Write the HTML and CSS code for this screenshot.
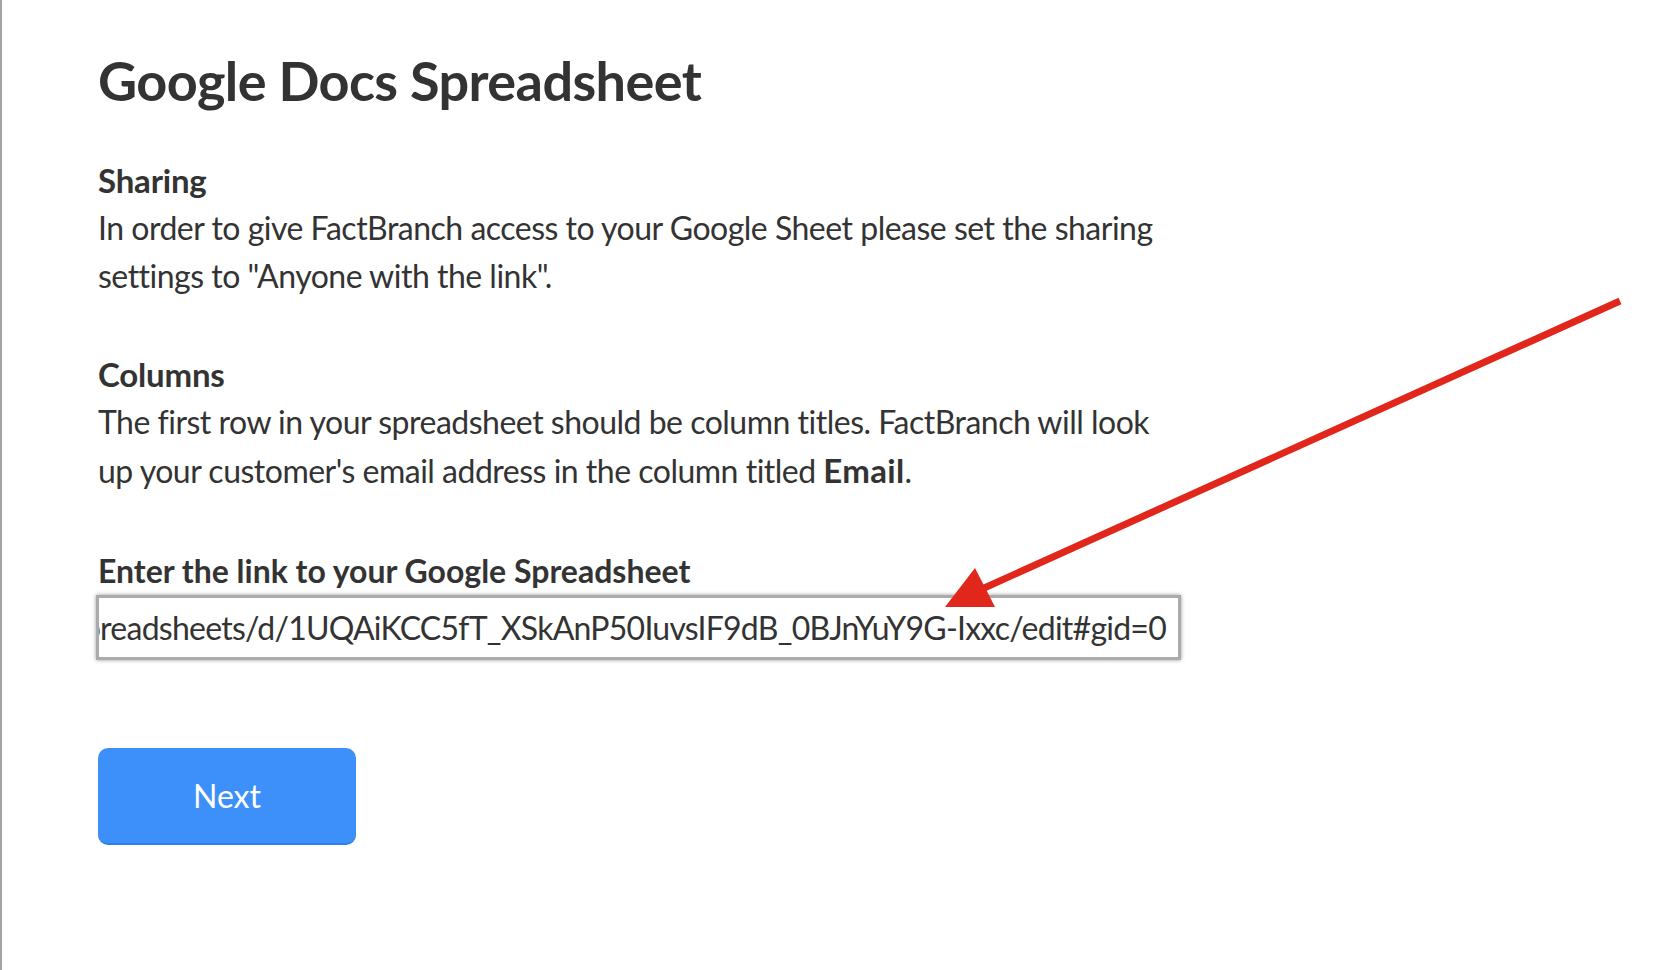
FILE: index.html
```html
<!DOCTYPE html>
<html lang="en">
<head>
<meta charset="utf-8">
<title>Google Docs Spreadsheet</title>
<link rel="stylesheet" href="styles.css">
</head>
<body>
<div class="page">
  <main class="content">
    <h1 class="title">Google Docs Spreadsheet</h1>

    <section class="block">
      <h2 class="block-title">Sharing</h2>
      <p class="block-text">In order to give FactBranch access to your Google Sheet please set the sharing<br>settings to "Anyone with the link".</p>
    </section>

    <section class="block">
      <h2 class="block-title">Columns</h2>
      <p class="block-text">The first row in your spreadsheet should be column titles. FactBranch will look<br>up your customer's email address in the column titled <strong>Email</strong>.</p>
    </section>

    <section class="field">
      <label class="field-label">Enter the link to your Google Spreadsheet</label>
      <div class="field-input" role="textbox"><span class="field-value">https://docs.google.com/spreadsheets/d/1UQAiKCC5fT_XSkAnP50IuvsIF9dB_0BJnYuY9G-Ixxc/edit#gid=0</span></div>
    </section>

    <button class="next-btn" type="button">Next</button>
  </main>

  <svg class="annotation" width="1671" height="970" viewBox="0 0 1671 970" aria-hidden="true">
    <line x1="1620" y1="301" x2="982" y2="589" stroke="#e1261c" stroke-width="7" stroke-linecap="butt"/>
    <polygon points="945,607 975,568 995,607" fill="#e1261c"/>
  </svg>
</div>
</body>
</html>
```

FILE: styles.css
```css
html, body {
  margin: 0;
  padding: 0;
  background: #ffffff;
}

body {
  font-family: "Lato", "Open Sans", sans-serif;
  color: #333333;
}

.page {
  position: relative;
  min-height: 970px;
  border-left: 2px solid #a3a3a3;
  box-sizing: border-box;
}

.content {
  display: flex;
  flex-direction: column;
  align-items: flex-start;
  padding: 49px 0 0 96px;
  width: 1100px;
}

.title {
  margin: 0;
  font-size: 54px;
  line-height: 64px;
  font-weight: 700;
  letter-spacing: -0.6px;
}

.block {
  margin-top: 43px;
}

.block + .block {
  margin-top: 50px;
}

.block-title {
  margin: 0;
  font-size: 33px;
  line-height: 48px;
  font-weight: 700;
  letter-spacing: -0.2px;
}

.block-text {
  margin: 0;
  font-size: 32px;
  line-height: 48px;
  font-weight: 400;
  letter-spacing: -0.5px;
  white-space: nowrap;
}

.block-text strong {
  font-weight: 700;
  font-size: 33px;
  letter-spacing: 0.3px;
}

.field {
  margin-top: 52px;
  display: flex;
  flex-direction: column;
}

.field-label {
  font-size: 32px;
  line-height: 48px;
  font-weight: 700;
}

.field-input {
  box-sizing: border-box;
  width: 1085px;
  height: 65px;
  margin-left: -2px;
  border: 3px solid #ababab;
  box-shadow: 0 0 4px rgba(0, 0, 0, 0.4);
  background: #fff;
  display: flex;
  justify-content: flex-end;
  align-items: center;
  overflow: hidden;
  white-space: nowrap;
  padding: 0 12px 0 6px;
}

.field-value {
  font-size: 32px;
  line-height: 40px;
  letter-spacing: -0.75px;
  color: #333;
  flex: none;
}

.next-btn {
  margin-top: 88px;
  width: 258px;
  height: 97px;
  border: none;
  border-bottom: 2px solid #2a80ee;
  border-radius: 10px;
  background: #3d90f9;
  color: #ffffff;
  font-family: inherit;
  font-size: 32px;
  font-weight: 400;
  cursor: pointer;
  padding: 0;
}

.annotation {
  position: absolute;
  left: -2px;
  top: 0;
  pointer-events: none;
}
```
